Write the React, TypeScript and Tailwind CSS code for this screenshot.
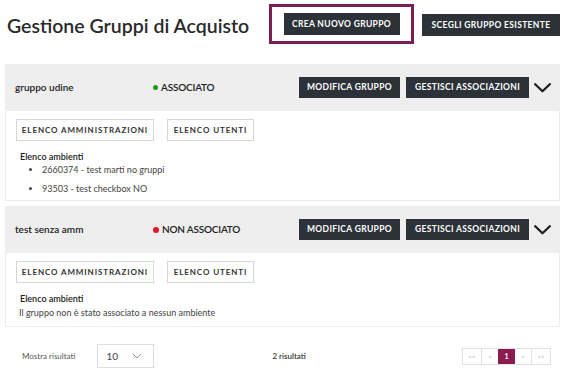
import { ChevronDown } from 'lucide-react';

const darkBtn =
    'h-[21px] bg-[#2c3237] text-white text-[8.5px] font-bold tracking-[0.35px] uppercase whitespace-nowrap flex items-center justify-center';
const lightBtn =
    'h-[22px] border border-[#d6d6d6] bg-white text-[#333] text-[8px] font-bold tracking-[0.9px] uppercase whitespace-nowrap flex items-center justify-center';

type Group = {
    name: string;
    associated: boolean;
    environments: string[];
};

const groups: Group[] = [
    {
        name: 'gruppo udine',
        associated: true,
        environments: ['2660374 - test marti no gruppi', '93503 - test checkbox NO'],
    },
    { name: 'test senza amm', associated: false, environments: [] },
];

function GroupCard({ group }: { group: Group }) {
    return (
        <div>
            <div className="h-[47px] bg-[#eeeeee] flex items-center pl-[10px] pr-[9px]">
                <span className="w-[138px] text-[10px] font-semibold text-[#222]">{group.name}</span>
                <span className="flex items-center gap-[3px] text-[10px] font-semibold tracking-[-0.2px] text-[#222]">
                    <span
                        className={
                            group.associated
                                ? 'w-[5px] h-[5px] rounded-full bg-[#1a9a1a]'
                                : 'w-[6px] h-[6px] rounded-full bg-[#e5132b]'
                        }
                    />
                    {group.associated ? 'ASSOCIATO' : 'NON ASSOCIATO'}
                </span>
                <div className="ml-auto flex items-center gap-[6px]">
                    <button className={`${darkBtn} w-[101px]`}>Modifica gruppo</button>
                    <button className={`${darkBtn} w-[123px]`}>Gestisci associazioni</button>
                    <svg className="w-[17px] h-[10px] ml-[-1px]" viewBox="0 0 17 10" fill="none">
                        <polyline
                            points="1.2,1.2 8.5,8.3 15.8,1.2"
                            stroke="#1f1f1f"
                            strokeWidth="2.3"
                            strokeLinecap="round"
                            strokeLinejoin="round"
                        />
                    </svg>
                </div>
            </div>
            <div className="border border-t-0 border-[#ececec] px-[10px] pt-[8px] pb-[6px]">
                <div className="flex gap-[13px]">
                    <button className={`${lightBtn} w-[138px]`}>Elenco amministrazioni</button>
                    <button className={`${lightBtn} w-[87px]`}>Elenco utenti</button>
                </div>
                <div className="mt-[9px] pl-[4px] text-[9px] font-semibold text-[#222] leading-[13px]">
                    Elenco ambienti
                </div>
                {group.environments.length > 0 ? (
                    <ul className="mt-[-3px] mb-[-4px] pl-[26px] list-disc text-[9px] text-[#444] leading-[19px]">
                        {group.environments.map((env) => (
                            <li key={env}>{env}</li>
                        ))}
                    </ul>
                ) : (
                    <div className="mt-[1px] pl-[3px] text-[9px] text-[#444] leading-[14px]">
                        Il gruppo non è stato associato a nessun ambiente
                    </div>
                )}
            </div>
        </div>
    );
}

export default function App() {
    return (
        <div className="w-[584px] h-[387px] bg-white overflow-hidden font-['Lato',sans-serif] text-[#333]">
            <div className="flex items-start pt-[4px] pl-[7px] pr-[24px]">
                <h1 className="mt-[9px] text-[19.5px] font-semibold text-[#2a2a2a] leading-[26px]">
                    Gestione Gruppi di Acquisto
                </h1>
                <div className="ml-auto flex items-start">
                    <div className="w-[145px] h-[40px] border-[3px] border-[#7a2151] flex items-center justify-center">
                        <button className={`${darkBtn} w-[116px] h-[22px]`}>Crea nuovo gruppo</button>
                    </div>
                    <button className={`${darkBtn} w-[138px] h-[22px] ml-[8px] mt-[10px]`}>
                        Scegli gruppo esistente
                    </button>
                </div>
            </div>

            <div className="mt-[20px] ml-[5px] w-[555px] flex flex-col gap-[5px]">
                {groups.map((g) => (
                    <GroupCard key={g.name} group={g} />
                ))}
            </div>

            <div className="mt-[17px] flex items-center pl-[22px] pr-[33px]">
                <span className="text-[8px] text-[#555]">Mostra risultati</span>
                <div className="ml-[22px] w-[57px] h-[24px] border border-[#ddd] flex items-center pl-[8px] pr-[8px]">
                    <span className="text-[10px] text-[#444]">10</span>
                    <ChevronDown className="ml-auto w-[16px] h-[16px] text-[#777]" strokeWidth={1.2} />
                </div>
                <span className="ml-[118px] text-[8px] font-semibold text-[#333]">2 risultati</span>
                <div className="ml-auto flex h-[17px] border border-[#e2e2e2] text-[6px] text-[#aaa]">
                    <span className="w-[18px] flex items-center justify-center">&lt;&lt;</span>
                    <span className="w-[17px] flex items-center justify-center border-l border-[#e2e2e2]">&lt;</span>
                    <span className="w-[17px] flex items-center justify-center bg-[#8a1c50] text-white text-[7px] font-bold">
                        1
                    </span>
                    <span className="w-[17px] flex items-center justify-center border-r border-[#e2e2e2]">&gt;</span>
                    <span className="w-[18px] flex items-center justify-center">&gt;&gt;</span>
                </div>
            </div>
        </div>
    );
}
